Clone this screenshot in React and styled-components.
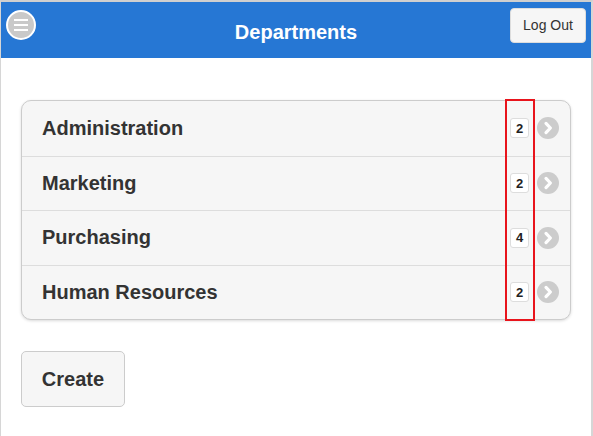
import styled, { createGlobalStyle } from 'styled-components';

const GlobalStyle = createGlobalStyle`
  html, body {
    margin: 0;
    padding: 0;
    background: #ffffff;
  }
  body {
    font-family: "Liberation Sans", Arial, Helvetica, sans-serif;
  }
`;

const Page = styled.div`
  width: 593px;
  height: 436px;
  box-sizing: border-box;
  border-top: 2px solid #cfcfcf;
  border-left: 1px solid #d6d6d6;
  border-right: 2px solid #d6d6d6;
  background: #ffffff;
  overflow: hidden;
`;

const Header = styled.header`
  height: 56px;
  background-color: #2677d4;
  display: flex;
  align-items: center;
  justify-content: space-between;
  padding: 0 5px 0 5px;
  position: relative;
`;

const MenuButton = styled.button`
  width: 30px;
  height: 30px;
  margin-top: -10px;
  border-radius: 50%;
  border: 2px solid #ffffff;
  background: #c9c9c9;
  display: flex;
  flex-direction: column;
  align-items: center;
  justify-content: center;
  gap: 3px;
  padding: 0;
  box-sizing: border-box;
`;

const MenuLine = styled.span`
  width: 14px;
  height: 2px;
  background: #ffffff;
`;

const Title = styled.h1`
  position: absolute;
  left: 0;
  right: 0;
  top: 0;
  bottom: 0;
  margin: 0;
  display: flex;
  align-items: center;
  justify-content: center;
  font-size: 20px;
  font-weight: 700;
  color: #ffffff;
  padding-top: 4px;
  pointer-events: none;
`;

const LogOut = styled.button`
  position: relative;
  z-index: 1;
  margin-top: -10px;
  width: 76px;
  height: 35px;
  background: #f6f6f6;
  border: 1px solid #dddddd;
  border-radius: 4px;
  font-family: inherit;
  font-size: 14px;
  color: #333333;
`;

const Content = styled.main`
  padding: 42px 20px 0 20px;
`;

const ListWrap = styled.div`
  position: relative;
`;

const List = styled.ul`
  list-style: none;
  margin: 0;
  padding: 0;
  border: 1px solid #cccccc;
  border-radius: 10px;
  background: #f6f6f6;
  box-shadow: 0 1px 3px rgba(0, 0, 0, 0.15);
  overflow: hidden;
`;

const Item = styled.li`
  height: 54.5px;
  box-sizing: border-box;
  display: flex;
  align-items: center;
  padding: 0 11px 0 20px;
  border-top: ${(p) => (p.$first ? 'none' : '1px solid #dddddd')};
`;

const Name = styled.span`
  flex: 1;
  font-size: 20px;
  font-weight: 700;
  color: #333333;
`;

const Count = styled.span`
  width: 19px;
  height: 20px;
  box-sizing: border-box;
  display: flex;
  align-items: center;
  justify-content: center;
  background: #ffffff;
  border: 1px solid #dddddd;
  border-radius: 3px;
  font-size: 13px;
  font-weight: 700;
  color: #222222;
  margin-right: 8px;
`;

const Arrow = styled.span`
  width: 22px;
  height: 22px;
  border-radius: 50%;
  background: #cccccc;
  display: flex;
  align-items: center;
  justify-content: center;
`;

const Highlight = styled.div`
  position: absolute;
  top: -1px;
  bottom: -1px;
  left: 484px;
  width: 30px;
  box-sizing: border-box;
  border: 2px solid #e8141c;
  pointer-events: none;
`;

const CreateButton = styled.button`
  margin-top: 31px;
  width: 104px;
  height: 56px;
  background: #f6f6f6;
  border: 1px solid #cccccc;
  border-radius: 5px;
  font-family: inherit;
  font-size: 20px;
  font-weight: 700;
  color: #333333;
`;

const departments = [
  { name: 'Administration', count: 2 },
  { name: 'Marketing', count: 2 },
  { name: 'Purchasing', count: 4 },
  { name: 'Human Resources', count: 2 },
];

const Chevron = () => (
  <svg width="14" height="14" viewBox="0 0 14 14">
    <path d="M5 2.4 L9.4 7 L5 11.6" fill="none" stroke="#ffffff" strokeWidth="3.2" strokeLinecap="round" strokeLinejoin="round" />
  </svg>
);

const App = () => {
  return (
    <Page>
      <GlobalStyle />
      <Header>
        <MenuButton aria-label="menu">
          <MenuLine />
          <MenuLine />
          <MenuLine />
        </MenuButton>
        <Title>Departments</Title>
        <LogOut>Log Out</LogOut>
      </Header>
      <Content>
        <ListWrap>
          <List>
            {departments.map((d, i) => (
              <Item key={d.name} $first={i === 0}>
                <Name>{d.name}</Name>
                <Count>{d.count}</Count>
                <Arrow>
                  <Chevron />
                </Arrow>
              </Item>
            ))}
          </List>
          <Highlight />
        </ListWrap>
        <CreateButton>Create</CreateButton>
      </Content>
    </Page>
  );
};

export default App;
